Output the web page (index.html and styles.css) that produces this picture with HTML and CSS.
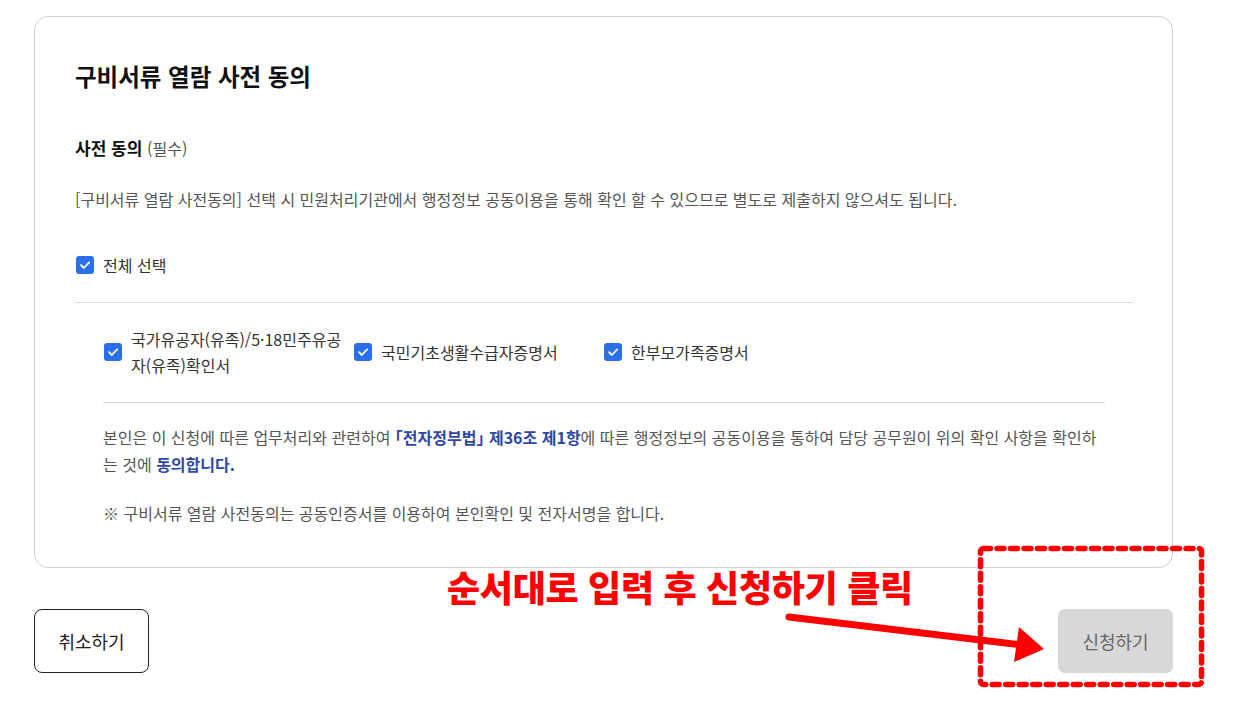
FILE: index.html
```html
<!DOCTYPE html>
<html lang="ko">
<head>
    <meta charset="UTF-8">
    <title>구비서류 열람 사전 동의</title>
    <link rel="stylesheet" href="styles.css">
</head>
<body>
    <div class="page">
        <section class="card">
            <h1 class="card-title">구비서류 열람 사전 동의</h1>

            <h2 class="sub-title">사전 동의 <span class="required">(필수)</span></h2>
            <p class="desc">[구비서류 열람 사전동의] 선택 시 민원처리기관에서 행정정보 공동이용을 통해 확인 할 수 있으므로 별도로 제출하지 않으셔도 됩니다.</p>

            <label class="check-row">
                <span class="check"><svg viewBox="0 0 18 18"><path d="M5 9.2l2.8 2.8L13.2 6.4" fill="none" stroke="#fff" stroke-width="1.8" stroke-linecap="round" stroke-linejoin="round"/></svg></span>
                <span>전체 선택</span>
            </label>

            <div class="sub-box">
                <div class="doc-list">
                    <label class="doc-item">
                        <span class="check"><svg viewBox="0 0 18 18"><path d="M5 9.2l2.8 2.8L13.2 6.4" fill="none" stroke="#fff" stroke-width="1.8" stroke-linecap="round" stroke-linejoin="round"/></svg></span>
                        <span class="doc-name">국가유공자(유족)/5·18민주유공자(유족)확인서</span>
                    </label>
                    <label class="doc-item">
                        <span class="check"><svg viewBox="0 0 18 18"><path d="M5 9.2l2.8 2.8L13.2 6.4" fill="none" stroke="#fff" stroke-width="1.8" stroke-linecap="round" stroke-linejoin="round"/></svg></span>
                        <span class="doc-name">국민기초생활수급자증명서</span>
                    </label>
                    <label class="doc-item">
                        <span class="check"><svg viewBox="0 0 18 18"><path d="M5 9.2l2.8 2.8L13.2 6.4" fill="none" stroke="#fff" stroke-width="1.8" stroke-linecap="round" stroke-linejoin="round"/></svg></span>
                        <span class="doc-name">한부모가족증명서</span>
                    </label>
                </div>

                <p class="agree">본인은 이 신청에 따른 업무처리와 관련하여 <strong>「전자정부법」 제36조 제1항</strong>에 따른 행정정보의 공동이용을 통하여 담당 공무원이 위의 확인 사항을 확인하는 것에 <strong>동의합니다.</strong></p>
                <p class="note">※ 구비서류 열람 사전동의는 공동인증서를 이용하여 본인확인 및 전자서명을 합니다.</p>
            </div>
        </section>

        <div class="actions">
            <button class="btn-cancel">취소하기</button>
            <button class="btn-submit">신청하기</button>
        </div>
    </div>

    <!-- guide annotation drawn over the page -->
    <div class="guide-text">순서대로 입력 후 신청하기 클릭</div>
    <svg class="guide-marks" width="1236" height="709" viewBox="0 0 1236 709">
        <rect x="980.5" y="548.5" width="221" height="136" rx="3" fill="none" stroke="#f00" stroke-width="5.5" stroke-dasharray="7 6.5" stroke-linecap="round"/>
        <line x1="789" y1="617" x2="1022" y2="645" stroke="#f00" stroke-width="7" stroke-linecap="round"/>
        <polygon points="1019,627 1044,649 1014,662" fill="#f00"/>
    </svg>
</body>
</html>
```

FILE: styles.css
```css
body, html {
    margin: 0;
    padding: 0;
    background-color: #fff;
    font-family: "Noto Sans CJK KR", "Noto Sans", sans-serif;
    color: #222;
}
.page {
    padding: 16px 0 0 34px;
    width: 1139px;
}
.card {
    border: 1px solid #cfcfcf;
    border-radius: 14px;
    padding: 44px 39px 40px 40px;
}
.card-title {
    margin: 0;
    font-size: 23.5px;
    line-height: 31px;
    font-weight: bold;
    color: #111;
}
.sub-title {
    margin: 44px 0 0;
    font-size: 17px;
    line-height: 24px;
    font-weight: bold;
    color: #111;
}
.required {
    font-size: 16px;
    font-weight: normal;
    color: #555;
}
.desc {
    margin: 28px 0 0;
    font-size: 16px;
    line-height: 22px;
    color: #555;
}
.check-row {
    margin-top: 44px;
    display: flex;
    align-items: center;
    gap: 9px;
    padding-left: 1px;
    padding-bottom: 26px;
    border-bottom: 1px solid #dcdcdc;
    font-size: 16px;
    line-height: 22px;
    color: #333;
}
.check {
    flex: none;
    width: 18px;
    height: 18px;
    border-radius: 3px;
    background-color: #2a6ee8;
    display: inline-flex;
}
.check svg {
    width: 18px;
    height: 18px;
}
.sub-box {
    margin: 0 28px;
}
.doc-list {
    display: flex;
    padding: 23px 0 24px 1px;
    border-bottom: 1px solid #dcdcdc;
}
.doc-item {
    width: 250px;
    display: flex;
    align-items: center;
    gap: 9px;
    font-size: 16px;
    line-height: 26px;
    color: #333;
}
.doc-name {
    width: 214px;
}
.agree {
    margin: 21px 0 0;
    font-size: 16px;
    line-height: 27px;
    color: #555;
}
.agree strong {
    color: #2d48a8;
    /* half-width corner brackets */
    font-feature-settings: "halt" 1;
}
.note {
    margin: 22px 0 0;
    font-size: 16px;
    line-height: 27px;
    color: #555;
}
.actions {
    margin-top: 41px;
    display: flex;
    justify-content: space-between;
}
.actions button {
    width: 115px;
    height: 64px;
    font-family: inherit;
    font-size: 18px;
    cursor: pointer;
}
.btn-cancel {
    background-color: #fff;
    border: 1px solid #222;
    border-radius: 8px;
    color: #222;
}
.btn-submit {
    background-color: #d8d8d8;
    border: none;
    border-radius: 7px;
    color: #666;
}
.guide-text {
    position: absolute;
    left: 447px;
    top: 562px;
    font-size: 36px;
    line-height: 48px;
    font-weight: 900;
    color: #f00;
    letter-spacing: -0.3px;
}
.guide-marks {
    position: absolute;
    left: 0;
    top: 0;
    pointer-events: none;
}
```
